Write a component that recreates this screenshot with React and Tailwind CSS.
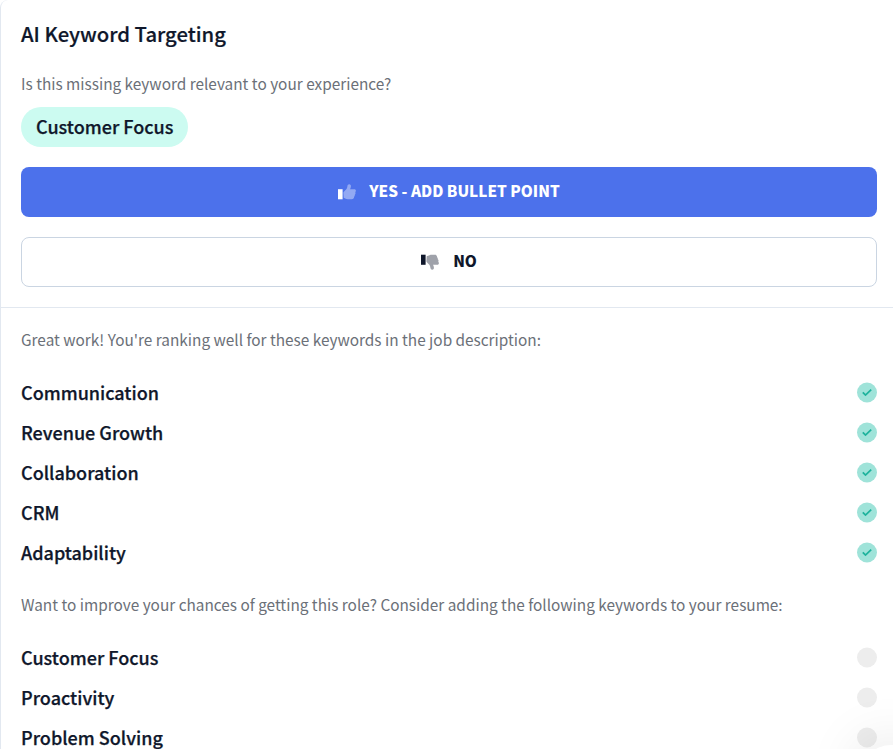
const matched = ['Communication', 'Revenue Growth', 'Collaboration', 'CRM', 'Adaptability']
const missing = ['Customer Focus', 'Proactivity', 'Problem Solving']

function ThumbIcon({ down, className }) {
  return (
    <svg viewBox="0 0 18 16" className={className} fill="currentColor">
      <g transform={down ? 'matrix(1 0 0 -1 0 16)' : undefined}>
        <path d="M0 5.2h4.6v10.1H0z" />
        <path
          opacity=".4"
          d="M5.4 8.4C6 7.2 7 6.4 8.1 5.4 9 4.500 9.200 3.500 9.400 2.200 9.600 1 10.200.3 11.200.3c1.300 0 1.900 1 1.700 2.200-.1 1-.4 1.900-.9 2.800h4.400c.9 0 1.500.7 1.500 1.500 0 .6-.3 1.100-.7 1.400.3.4.4.8.3 1.300-.1.500-.3.900-.7 1.200.1 1-.1 1.700-.7 2.100 0 1.600-.8 2.500-2.300 2.500h-2.600c-2.100 0-3.300-.5-5.500-1.600z"
        />
      </g>
    </svg>
  )
}

function CheckBadge() {
  return (
    <span className="flex h-5 w-5 translate-y-[0.5px] items-center justify-center rounded-full bg-[#9fe3d9]">
      <svg viewBox="0 0 10 8" className="h-2 w-2.5" fill="none" stroke="#1fb39d" strokeWidth="1.8">
        <path d="M.8 3.900l2.700 2.700L9.200 1.100" />
      </svg>
    </span>
  )
}

function KeywordRow({ label, found }) {
  return (
    <li className="flex h-10 items-center justify-between">
      <span className="text-[18px] font-medium leading-10 [-webkit-text-stroke:0.25px_currentColor]">{label}</span>
      {found ? <CheckBadge /> : <span className="h-5 w-5 translate-y-[0.5px] rounded-full bg-[#ededed]" />}
    </li>
  )
}

export default function App() {
  return (
    <div className="relative h-[749px] overflow-hidden rounded-tl-lg border-l border-slate-200 bg-white font-['Noto_Sans_CJK_SC',sans-serif] text-slate-900">
      <section className="border-b border-slate-200 pb-5 pl-5 pr-4 pt-5">
        <h2 className="text-[20.25px] font-medium leading-7 [-webkit-text-stroke:0.2px_currentColor]">AI Keyword Targeting</h2>
        <p className="mt-6 text-[15.36px] leading-[22px] text-[#6b7078]">Is this missing keyword relevant to your experience?</p>
        <div className="mt-[13px] flex">
          <span className="h-10 rounded-full bg-[#ccfbf1] px-[15px] text-[18px] font-medium leading-[38px] [-webkit-text-stroke:0.25px_currentColor]">
            Customer Focus
          </span>
        </div>
        <button className="mt-5 flex h-[50px] w-full items-center justify-center rounded-lg bg-[#4c71eb] text-[15.3px] font-black text-white">
          <ThumbIcon className="mr-[13px] h-4 w-[18px]" />
          <span className="pb-[3px]">YES - ADD BULLET POINT</span>
        </button>
        <button className="mt-5 flex h-[50px] w-full items-center justify-center rounded-lg border border-slate-300 text-[15.3px] font-black">
          <ThumbIcon down className="mr-3.5 h-4 w-[18px]" />
          <span className="pb-[3px]">NO</span>
        </button>
      </section>

      <section className="pl-5 pr-4 pt-5">
        <p className="text-[15.36px] leading-[22px] text-[#6b7078]">
          Great work! You're ranking well for these keywords in the job description:
        </p>
        <ul className="mt-[22px]">
          {matched.map((label) => (
            <KeywordRow key={label} label={label} found />
          ))}
        </ul>
        <p className="mt-[21px] text-[15.36px] leading-[22px] text-[#6b7078]">
          Want to improve your chances of getting this role? Consider adding the following keywords to your resume:
        </p>
        <ul className="mt-[22px]">
          {missing.map((label) => (
            <KeywordRow key={label} label={label} />
          ))}
        </ul>
      </section>

      {/* Floating chat launcher, mostly off screen */}
      <div className="absolute -bottom-[56px] -right-[28px] h-[60px] w-[60px] rounded-full bg-white shadow-[0_0_60px_rgba(0,0,0,0.14)]" />
    </div>
  )
}
